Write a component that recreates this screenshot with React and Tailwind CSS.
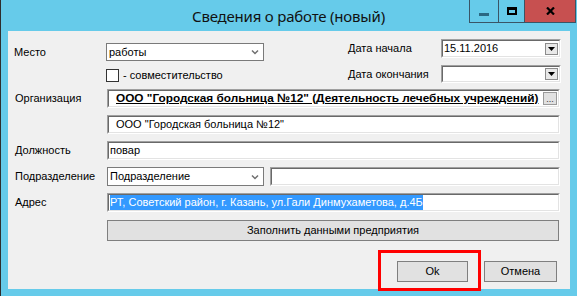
import React from "react";

const F = { fontFamily: '"Liberation Sans", Arial, sans-serif' };

function Sunken({ className = "", children }) {
  return (
    <div
      className={`border border-t-[#a0a0a0] border-l-[#a0a0a0] border-r-white border-b-white ${className}`}
    >
      <div className="h-full w-full border border-t-[#696969] border-l-[#696969] border-r-[#e3e3e3] border-b-[#e3e3e3] bg-white flex items-center overflow-hidden">
        {children}
      </div>
    </div>
  );
}

function Chevron() {
  return (
    <svg width="8" height="6" viewBox="0 0 8 6" className="mr-[4px]">
      <path d="M1 1.5 L4 4.5 L7 1.5" fill="none" stroke="#707070" strokeWidth="1.5" />
    </svg>
  );
}

function Combo({ className = "", text }) {
  return (
    <div className={`border border-[#7a7a7a] bg-white flex items-center justify-between ${className}`}>
      <span className="pl-[2px] text-[11px] leading-none text-black">{text}</span>
      <Chevron />
    </div>
  );
}

function DropBtn() {
  return (
    <div className="w-[13px] h-[12px] mr-[1px] border border-[#8c8c8c] bg-[#e8e8e8] flex items-center justify-center">
      <svg width="7" height="4" viewBox="0 0 7 4">
        <path d="M0 0 L7 0 L3.5 4 Z" fill="#000" />
      </svg>
    </div>
  );
}

function Label({ children, className = "" }) {
  return <div className={`text-[11px] leading-none text-black ${className}`}>{children}</div>;
}

export default function App() {
  return (
    <div style={F} className="w-[577px] h-[296px] bg-[#66cbea] border-l border-l-[#2e2e2e] flex flex-col overflow-hidden">
      {/* title bar */}
      <div className="h-[31px] grid grid-cols-[107px_1fr_108px] shrink-0">
        <div />
        <div
          className="text-center text-[15px] leading-none pt-[9px] text-[#111] tracking-[-0.2px]"
          style={{ fontFamily: '"Noto Sans", "Open Sans", sans-serif' }}
        >
          Сведения о работе (новый)
        </div>
        <div className="flex items-start">
          <div className="flex h-[23px] border border-[#3a5566] border-t-0">
            <div className="w-[29px] flex items-end justify-center pb-[6px] border-r border-[#3a5566]">
              <div className="w-[10px] h-[3px] bg-[#2b6883]" />
            </div>
            <div className="w-[26px] flex items-center justify-center border-r border-[#3a5566]">
              <div className="w-[10px] h-[8px] border-2 border-t-[3px] border-black" />
            </div>
            <div className="w-[50px] bg-[#c75050] flex items-center justify-center">
              <svg width="9" height="8" viewBox="0 0 9 8">
                <path d="M1 0.5 L8 7.5 M8 0.5 L1 7.5" stroke="#000" strokeWidth="2.2" />
              </svg>
            </div>
          </div>
        </div>
      </div>

      {/* client */}
      <div className="mx-[7px] h-[258px] bg-[#f0f0f0] flex flex-col shrink-0">
        {/* top section */}
        <div className="flex pt-[8px]">
          <div className="w-[340px] pt-[4px]">
            <div className="flex items-center">
              <Label className="w-[98px] pl-[6px]">Место</Label>
              <Combo className="w-[158px] h-[18px]" text="работы" />
            </div>
            <div className="flex items-center mt-[8px] ml-[98px]">
              <div className="w-[13px] h-[13px] border border-[#333] bg-white" />
              <Label className="ml-[4px]">- совместительство</Label>
            </div>
          </div>
          <div className="flex flex-col">
            <div className="flex items-center h-[19px]">
              <Label className="w-[93px]">Дата начала</Label>
              <Sunken className="w-[120px] h-[19px]">
                <span className="flex-1 pl-[1px] text-[11px] leading-none text-[#000]">15.11.2016</span>
                <DropBtn />
              </Sunken>
            </div>
            <div className="flex items-center h-[18px] mt-[7px]">
              <Label className="w-[93px]">Дата окончания</Label>
              <Sunken className="w-[120px] h-[18px]">
                <span className="flex-1" />
                <DropBtn />
              </Sunken>
            </div>
          </div>
        </div>

        {/* Организация */}
        <div className="flex items-center mt-[6px] h-[19px]">
          <Label className="w-[99px] pl-[7px]">Организация</Label>
          <Sunken className="w-[453px] h-[19px]">
            <span className="flex-1 pl-[7px] text-[11.8px] leading-none font-bold underline text-black whitespace-nowrap">
              ООО "Городская больница №12" (Деятельность лечебных учреждений)
            </span>
            <div className="w-[14px] h-[13px] mr-[1px] border border-[#9a9a9a] bg-[#e1e1e1] flex items-end justify-center text-[9px] leading-[9px] text-[#333] shrink-0">
              ...
            </div>
          </Sunken>
        </div>

        <div className="flex items-center mt-[7px] h-[19px]">
          <div className="w-[99px]" />
          <Sunken className="w-[453px] h-[19px]">
            <span className="pl-[7px] text-[11px] leading-none text-black whitespace-nowrap">
              ООО "Городская больница №12"
            </span>
          </Sunken>
        </div>

        <div className="flex items-center mt-[7px] h-[19px]">
          <Label className="w-[99px] pl-[7px]">Должность</Label>
          <Sunken className="w-[453px] h-[19px]">
            <span className="pl-[1px] text-[11px] leading-none text-black">повар</span>
          </Sunken>
        </div>

        <div className="flex items-center mt-[7px] h-[19px]">
          <Label className="w-[99px] pl-[7px]">Подразделение</Label>
          <Combo className="w-[157px] h-[19px]" text="Подразделение" />
          <Sunken className="ml-[6px] w-[290px] h-[19px]" />
        </div>

        <div className="flex items-center mt-[7px] h-[19px]">
          <Label className="w-[99px] pl-[7px]">Адрес</Label>
          <Sunken className="w-[453px] h-[19px]">
            <span className="ml-[1px] bg-[#3399ff] text-white text-[11px] leading-[15px] whitespace-nowrap">
              РТ, Советский район, г. Казань, ул.Гали Динмухаметова, д.4Б
            </span>
          </Sunken>
        </div>

        <div className="flex mt-[8px]">
          <div className="w-[99px]" />
          <div className="w-[452px] h-[21px] border border-[#7f7f7f] bg-[#e1e1e1] flex items-center justify-center text-[11px] leading-none text-black">
            Заполнить данными предприятия
          </div>
        </div>

        <div className="flex justify-end mt-[20px] pr-[13px] gap-[16px]">
          <div className="relative w-[71px] h-[21px] border border-[#7f7f7f] bg-[#e1e1e1] flex items-center justify-center text-[11px] leading-none text-black">
            Ok
            <div className="absolute left-[-20px] top-[-12px] w-[103px] h-[41px] border-[3px] border-[#ff0000]" />
          </div>
          <div className="w-[73px] h-[21px] border border-[#7f7f7f] bg-[#e1e1e1] flex items-center justify-center text-[11px] leading-none text-black">
            Отмена
          </div>
        </div>
      </div>
    </div>
  );
}
